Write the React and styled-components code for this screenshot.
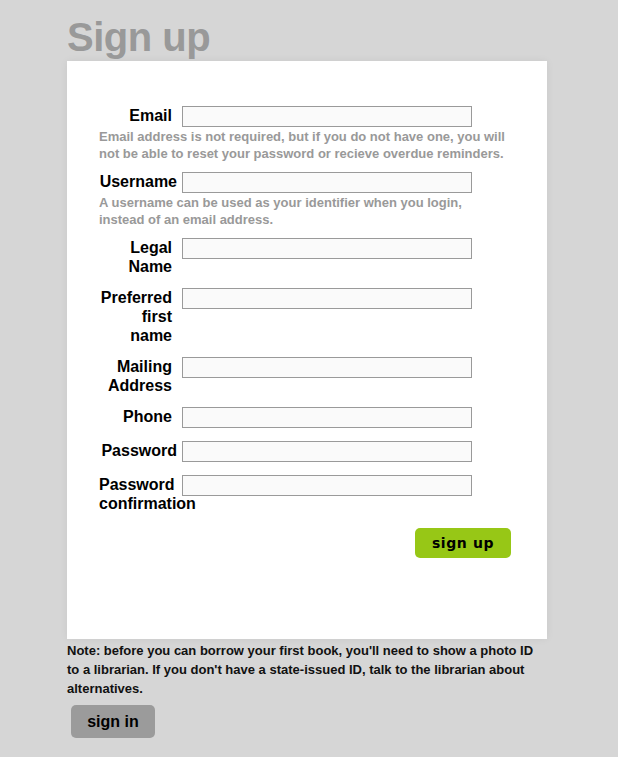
import React from 'react';
import styled, { createGlobalStyle } from 'styled-components';

const GlobalStyle = createGlobalStyle`
  html, body {
    margin: 0;
    padding: 0;
    background: #d6d6d6;
    font-family: "Liberation Sans", Arial, sans-serif;
  }
`;

const Page = styled.div`
  width: 480px;
  padding: 14px 0 0 67px;
`;

const Title = styled.h1`
  margin: 0;
  height: 47px;
  font-size: 40px;
  line-height: 47px;
  font-weight: 700;
  color: #999;
  letter-spacing: -0.5px;
`;

const Card = styled.div`
  background: #fff;
  box-shadow: 0 0 8px rgba(0, 0, 0, 0.06);
  padding: 45px 36px 81px 32px;
  height: 578px;
  box-sizing: border-box;
`;

const Row = styled.div`
  display: grid;
  grid-template-columns: 78px 290px;
  column-gap: 5px;
  align-items: start;
  margin-bottom: ${(p) => p.$gap || 12}px;
`;

const Label = styled.label`
  font-size: 16px;
  line-height: 19px;
  font-weight: 700;
  color: #000;
  text-align: ${(p) => (p.$left ? 'left' : 'right')};
  padding-right: ${(p) => p.$pad || 0}px;
  white-space: ${(p) => (p.$nowrap ? 'nowrap' : 'normal')};
`;

const Input = styled.input`
  box-sizing: border-box;
  width: 290px;
  height: 21px;
  margin: 0;
  border: 1px solid #9a9a9a;
  background: #fafafa;
  font-size: 13px;
`;

const Hint = styled.div`
  grid-column: 1 / span 2;
  margin-top: 1px;
  font-size: 13px;
  line-height: 17px;
  font-weight: 700;
  color: #999;
  width: 410px;
`;

const Actions = styled.div`
  display: flex;
  justify-content: flex-end;
  width: 412px;
  margin-top: 15px;
`;

const SignUpButton = styled.button`
  width: 96px;
  height: 30px;
  border: none;
  border-radius: 5px;
  background: #97c716;
  color: #000;
  font-family: "DejaVu Sans", Verdana, sans-serif;
  font-size: 14px;
  font-weight: 700;
  letter-spacing: 0.6px;
  cursor: pointer;
`;

const Note = styled.p`
  margin: 0;
  padding-top: 2px;
  font-size: 13px;
  line-height: 19px;
  font-weight: 700;
  color: #111;
  width: 470px;
`;

const SignInButton = styled.button`
  display: block;
  margin: 7px 0 0 4px;
  width: 84px;
  height: 33px;
  border: none;
  border-radius: 5px;
  background: #9b9b9b;
  color: #000;
  font-family: "Liberation Sans", Arial, sans-serif;
  font-size: 16px;
  font-weight: 700;
  cursor: pointer;
`;

export default function App() {
  return (
    <>
      <GlobalStyle />
      <Page>
        <Title>Sign up</Title>
        <Card>
          <Row $gap={10}>
            <Label $pad={5}>Email</Label>
            <Input type="email" />
            <Hint>
              Email address is not required, but if you do not have one, you will not be able to reset your password or recieve overdue reminders.
            </Hint>
          </Row>
          <Row $gap={10}>
            <Label $nowrap>Username</Label>
            <Input type="text" />
            <Hint>A username can be used as your identifier when you login, instead of an email address.</Hint>
          </Row>
          <Row>
            <Label $pad={5}>Legal Name</Label>
            <Input type="text" />
          </Row>
          <Row>
            <Label $pad={5}>Preferred first name</Label>
            <Input type="text" />
          </Row>
          <Row>
            <Label $pad={5}>Mailing Address</Label>
            <Input type="text" />
          </Row>
          <Row $gap={13}>
            <Label $pad={5}>Phone</Label>
            <Input type="tel" />
          </Row>
          <Row $gap={13}>
            <Label $nowrap>Password</Label>
            <Input type="password" />
          </Row>
          <Row $gap={0}>
            <Label $left $nowrap>Password<br />confirmation</Label>
            <Input type="password" />
          </Row>
          <Actions>
            <SignUpButton>sign up</SignUpButton>
          </Actions>
        </Card>
        <Note>
          Note: before you can borrow your first book, you'll need to show a photo ID to a librarian. If you don't have a state-issued ID, talk to the librarian about alternatives.
        </Note>
        <SignInButton>sign in</SignInButton>
      </Page>
    </>
  );
}
